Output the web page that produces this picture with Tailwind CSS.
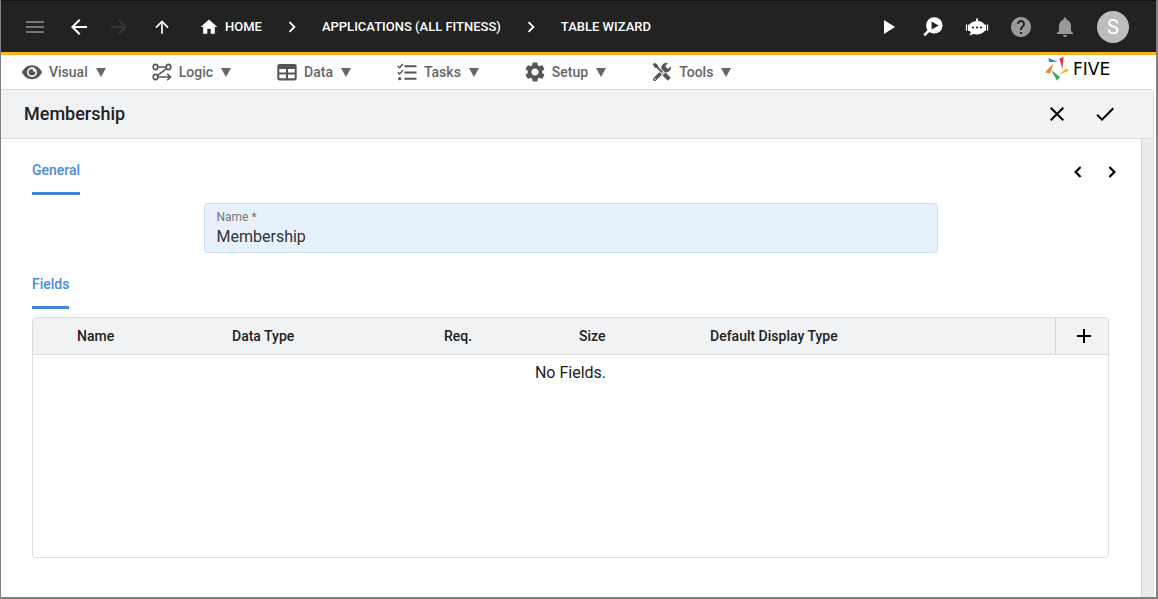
<!DOCTYPE html>
<html lang="en">
<head>
<meta charset="utf-8">
<meta name="viewport" content="width=device-width, initial-scale=1">
<title>Membership - Table Wizard</title>
<script src="https://cdn.jsdelivr.net/npm/@tailwindcss/browser@4"></script>
</head>
<body class="flex h-screen flex-col overflow-hidden border-r-2 border-b-2 border-l border-[#808080] bg-white font-['Roboto','Liberation_Sans',sans-serif] text-[#212121]">

<header class="flex h-[55px] shrink-0 items-center border-t border-b-3 border-t-[#111111] border-b-[#fbb321] bg-[#222222] text-white">
  <nav class="flex items-center pl-3" aria-label="Breadcrumb">
    <button type="button" aria-label="Menu" class="flex h-11 w-11 items-center justify-center text-[#757575]">
      <svg class="size-6" viewBox="0 0 24 24" fill="currentColor"><path d="M3 18h18v-2H3v2zm0-5h18v-2H3v2zm0-7v2h18V6H3z"/></svg>
    </button>
    <button type="button" aria-label="Back" class="flex h-11 w-11 items-center justify-center">
      <svg class="size-6" viewBox="0 0 24 24" fill="currentColor"><path d="M20 11H7.83l5.59-5.59L12 4l-8 8 8 8 1.41-1.41L7.83 13H20v-2z"/></svg>
    </button>
    <button type="button" aria-label="Forward" disabled class="flex h-11 w-9 items-center justify-center text-[#363636]">
      <svg class="size-6" viewBox="0 0 24 24" fill="currentColor"><path d="M4 11h12.17l-5.59-5.59L12 4l8 8-8 8-1.41-1.41L16.17 13H4v-2z"/></svg>
    </button>
    <button type="button" aria-label="Up" class="flex h-11 w-[50px] items-center justify-center">
      <svg class="size-5" viewBox="0 0 24 24" fill="currentColor"><path d="M4 12l1.41 1.41L11 7.83V20h2V7.83l5.58 5.59L20 12l-8-8-8 8z"/></svg>
    </button>
    <a href="#" class="ml-3 flex items-center gap-[6px] text-[13px] font-medium">
      <svg class="size-5" viewBox="0 0 24 24" fill="currentColor"><path d="M10 20v-6h4v6h5v-8h3L12 3 2 12h3v8z"/></svg>
      HOME
    </a>
    <span class="flex w-15 justify-center"><svg class="size-[22px]" viewBox="0 0 24 24" fill="currentColor"><path d="M10 6 8.59 7.41 13.17 12l-4.58 4.59L10 18l6-6z"/></svg></span>
    <a href="#" class="text-[13px] font-medium">APPLICATIONS (ALL FITNESS)</a>
    <span class="flex w-15 justify-center"><svg class="size-[22px]" viewBox="0 0 24 24" fill="currentColor"><path d="M10 6 8.59 7.41 13.17 12l-4.58 4.59L10 18l6-6z"/></svg></span>
    <a href="#" class="text-[13px] font-medium">TABLE WIZARD</a>
  </nav>
  <div class="ml-auto flex items-center pr-[17px]">
    <button type="button" aria-label="Run" class="flex size-11 items-center justify-center">
      <svg class="size-6" viewBox="0 0 24 24" fill="currentColor"><path d="M7 5v14l11-7z"/></svg>
    </button>
    <button type="button" aria-label="Inspect" class="flex size-11 items-center justify-center">
      <svg class="size-6" viewBox="0 0 24 24"><path d="M8 15.5 3.2 20.4" stroke="#fff" stroke-width="2.6"/><circle cx="13.3" cy="10.4" r="8.2" fill="#fff"/><path d="M10.6 6.4v8l7-4z" fill="#222"/></svg>
    </button>
    <button type="button" aria-label="Assistant" class="flex size-11 items-center justify-center">
      <svg class="size-6" viewBox="0 0 24 24"><path d="M11 3.500h2v2.500c3 .2 5.300 1.500 6.500 3.500h.5c.6 0 1 .4 1 1v4.500c0 .6-.4 1-1 1h-.5c-1.500 2.200-4.200 3.500-7.500 3.500-1.200 0-2.400-.2-3.400-.5L4.500 20.500l1.300-3.500c-.5-.3-.9-.7-1.300-1H4c-.6 0-1-.4-1-1v-4.500c0-.6.4-1 1-1h.5C5.700 7.700 8 6.300 11 6z" fill="#fff"/><path d="M1.500 9.500v6M22.500 9.500v6" stroke="#fff" stroke-width="1.300"/><circle cx="8" cy="12.500" r="1.100" fill="#222"/><circle cx="12" cy="12.500" r="1.100" fill="#222"/><circle cx="16" cy="12.500" r="1.100" fill="#222"/></svg>
    </button>
    <button type="button" aria-label="Help" class="flex size-11 items-center justify-center text-[#999999]">
      <svg class="size-6" viewBox="0 0 24 24" fill="currentColor"><path d="M12 2C6.480 2 2 6.480 2 12s4.480 10 10 10 10-4.480 10-10S17.520 2 12 2zm1 17h-2v-2h2v2zm2.070-7.750l-.9.920C13.450 12.900 13 13.500 13 15h-2v-.5c0-1.100.45-2.100 1.170-2.830l1.240-1.260c.37-.36.59-.86.59-1.410 0-1.100-.9-2-2-2s-2 .9-2 2H8c0-2.210 1.790-4 4-4s4 1.790 4 4c0 .88-.36 1.680-.93 2.250z"/></svg>
    </button>
    <button type="button" aria-label="Notifications" class="flex size-11 items-center justify-center text-[#999999]">
      <svg class="size-6" viewBox="0 0 24 24" fill="currentColor"><path d="M12 22c1.100 0 2-.9 2-2h-4c0 1.100.89 2 2 2zm6-6v-5c0-3.070-1.640-5.640-4.500-6.320V4c0-.83-.67-1.500-1.500-1.500s-1.500.67-1.500 1.500v.68C7.630 5.360 6 7.920 6 11v5l-2 2v1h16v-1l-2-2z"/></svg>
    </button>
    <button type="button" aria-label="Account" class="flex h-11 w-[52px] items-center justify-center">
      <span class="flex size-8 items-center justify-center rounded-full bg-[#bdbdbd] text-xl text-white">S</span>
    </button>
  </div>
</header>

<nav class="flex h-[34px] shrink-0 items-center pl-[21px] text-[14px] font-medium text-[#666666]" aria-label="Main">
  <div class="flex items-center gap-[46px]">
    <button type="button" class="flex items-center gap-[7px]">
      <svg class="size-5 text-[#555555]" viewBox="0 0 20 20" fill="currentColor"><path fill-rule="evenodd" d="M10 3.200C5.500 3.200 1.700 6 0 10.200c1.700 4.200 5.500 7 10 7s8.300-2.800 10-7c-1.700-4.200-5.500-7-10-7zm0 2.100a4.900 4.900 0 1 1 0 9.800 4.900 4.900 0 0 1 0-9.800zm0 1.700a3.300 3.300 0 1 0 3.300 3.300c0-.3 0-.6-.1-.9a1.700 1.700 0 0 1-2.300-2.300c-.3-.1-.6-.1-.9-.1z"/></svg>
      <span class="flex items-center gap-2">Visual <svg class="h-[9px] w-[10px]" viewBox="0 0 10 9" fill="currentColor"><path d="M0 0h10L5 9z"/></svg></span>
    </button>
    <button type="button" class="flex items-center gap-[7px]">
      <svg class="size-5 text-[#555555]" viewBox="0 0 20 20" fill="none" stroke="currentColor" stroke-width="1.600"><ellipse cx="3.500" cy="5" rx="2.300" ry="2.600"/><ellipse cx="16.500" cy="5" rx="2.300" ry="2.600"/><ellipse cx="3.500" cy="15" rx="2.300" ry="2.600"/><path d="M6 5h8.200M14.700 6.700 5.500 13.300M6 15h12M15.200 11.800l3.300 3.200-3.300 3.200"/></svg>
      <span class="flex items-center gap-2">Logic <svg class="h-[9px] w-[10px]" viewBox="0 0 10 9" fill="currentColor"><path d="M0 0h10L5 9z"/></svg></span>
    </button>
    <button type="button" class="flex items-center gap-[7px]">
      <svg class="size-5 text-[#555555]" viewBox="0 0 20 20" fill="currentColor"><path fill-rule="evenodd" d="M2.500 2h15A2.200 2.200 0 0 1 19.700 4.200v12a2.200 2.200 0 0 1-2.200 2.200h-15A2.200 2.200 0 0 1 .3 16.200v-12A2.200 2.200 0 0 1 2.500 2zM2.300 7v3.600h6.700V7zm8.700 0v3.600h6.700V7zM2.300 12.600v3.700h6.700v-3.700zm8.700 0v3.700h6.700v-3.700z"/></svg>
      <span class="flex items-center gap-2">Data <svg class="h-[9px] w-[10px]" viewBox="0 0 10 9" fill="currentColor"><path d="M0 0h10L5 9z"/></svg></span>
    </button>
    <button type="button" class="flex items-center gap-[7px]">
      <svg class="size-5 text-[#555555]" viewBox="0 0 20 20"><path d="M7.500 4.300h12M7.500 10.500h12M7.500 16.700h12" stroke="currentColor" stroke-width="2"/><path d="M.8 4l1.700 1.700L6 2M.8 10.200l1.700 1.700L6 8.200" fill="none" stroke="currentColor" stroke-width="1.500"/><circle cx="2.700" cy="16.700" r="1.600" fill="currentColor"/></svg>
      <span class="flex items-center gap-2">Tasks <svg class="h-[9px] w-[10px]" viewBox="0 0 10 9" fill="currentColor"><path d="M0 0h10L5 9z"/></svg></span>
    </button>
    <button type="button" class="flex items-center gap-[7px]">
      <svg class="size-5 text-[#555555]" viewBox="2 2 20 20" fill="currentColor"><path d="M19.140 12.940c.04-.3.060-.61.060-.94 0-.32-.02-.64-.07-.94l2.030-1.580c.18-.14.230-.41.120-.61l-1.920-3.320c-.12-.22-.37-.29-.59-.22l-2.390.96c-.5-.38-1.030-.7-1.620-.94l-.36-2.540c-.04-.24-.24-.41-.48-.41h-3.840c-.24 0-.43.17-.47.41l-.36 2.540c-.59.240-1.130.570-1.620.940l-2.390-.96c-.22-.08-.47 0-.59.220L2.740 8.870c-.12.210-.08.470.120.610l2.030 1.580c-.05.300-.09.630-.09.940s.02.640.070.940l-2.030 1.580c-.18.140-.23.410-.12.610l1.920 3.320c.12.220.37.290.59.220l2.390-.96c.5.380 1.030.7 1.620.940l.36 2.540c.05.240.240.410.480.410h3.840c.24 0 .44-.17.470-.41l.36-2.540c.59-.24 1.130-.56 1.620-.94l2.390.960c.22.080.470 0 .590-.22l1.920-3.320c.12-.22.070-.47-.12-.61l-2.010-1.580zM12 15.600c-1.980 0-3.600-1.620-3.600-3.600s1.620-3.600 3.600-3.600 3.600 1.620 3.600 3.600-1.620 3.600-3.600 3.600z"/></svg>
      <span class="flex items-center gap-2">Setup <svg class="h-[9px] w-[10px]" viewBox="0 0 10 9" fill="currentColor"><path d="M0 0h10L5 9z"/></svg></span>
    </button>
    <button type="button" class="flex items-center gap-[7px]">
      <svg class="size-5 text-[#555555]" viewBox="0 0 20 20"><path d="M2.800 17.200 13.200 6.800" stroke="currentColor" stroke-width="3.600" stroke-linecap="round"/><path d="M18.800 4.200a5 5 0 0 1-7.900 5.200A5 5 0 0 1 15.900 1l-2.600 2.900.6 2.300 2.300.6z" fill="currentColor"/><path d="M2.300 2.300 11 11" stroke="#fff" stroke-width="3.800"/><path d="M.8 2.600 2.600.8l3.200 2.100.4 1.900 4.900 4.900-1.400 1.400-4.900-4.900-1.900-.4z" fill="currentColor"/><path d="m12 12 5.300 5.300" stroke="currentColor" stroke-width="4.400"/><circle cx="3" cy="17" r=".8" fill="#fff"/></svg>
      <span class="flex items-center gap-2">Tools <svg class="h-[9px] w-[10px]" viewBox="0 0 10 9" fill="currentColor"><path d="M0 0h10L5 9z"/></svg></span>
    </button>
  </div>
  <a href="#" aria-label="Five home" class="mt-[2px] mr-[23px] ml-auto flex items-center gap-1 self-start text-black">
    <svg class="size-6" viewBox="0 0 24 24"><path d="M3.500 1 4 5l9-.2z" fill="#3f83d8"/><path d="M14.300 1.500 18.600 0 17.500 12z" fill="#e5353b"/><path d="M24 13.700 13.800 17.800l7.500-6.300z" fill="#fbb321"/><path d="m6 13 9 7-2.800 3.800z" fill="#3ba657"/><path d="M8.200 6.500 5 16.500 0 15.500z" fill="#f58233"/></svg>
    <span class="w-[60px] font-['DejaVu_Sans',sans-serif] text-[17px] leading-5 font-normal">FIVE</span>
  </a>
</nav>

<main class="mr-[2px] flex min-h-0 flex-1 flex-col rounded-tr border-t border-r border-[#dcdcdc]">
  <div class="flex h-[49px] shrink-0 items-center rounded-tr border-b border-[#dcdcdc] bg-[#f1f2f4] pr-6 pl-[23px]">
    <h1 class="text-lg font-medium">Membership</h1>
    <div class="ml-auto flex text-black">
      <button type="button" aria-label="Cancel" class="flex size-12 items-center justify-center">
        <svg class="size-6" viewBox="0 0 24 24" fill="currentColor"><path d="M19 6.410 17.590 5 12 10.590 6.410 5 5 6.410 10.590 12 5 17.590 6.410 19 12 13.410 17.590 19 19 17.590 13.410 12z"/></svg>
      </button>
      <button type="button" aria-label="Save" class="flex size-12 items-center justify-center">
        <svg class="size-6" viewBox="0 0 24 24" fill="currentColor"><path d="M9 16.170 4.830 12l-1.420 1.410L9 19 21 7l-1.410-1.410z"/></svg>
      </button>
    </div>
  </div>

  <div class="flex min-h-0 flex-1">
    <div class="flex min-w-0 flex-1 flex-col gap-2 pt-2 pr-8 pb-[39px] pl-[31px]">
      <div class="flex shrink-0 items-center justify-between">
        <h2 class="flex h-12 items-center rounded-t-xs border-b-3 border-[#4285d9] text-sm font-medium text-[#4a8bdb]">General</h2>
        <div class="-mr-5 flex text-black">
          <button type="button" aria-label="Previous" class="flex h-12 w-[34px] items-center justify-center pt-[2px]">
            <svg class="size-[22px]" viewBox="0 0 24 24" fill="currentColor"><path d="M15.410 7.410 14 6l-6 6 6 6 1.410-1.410L10.830 12z" stroke="currentColor" stroke-width=".5"/></svg>
          </button>
          <button type="button" aria-label="Next" class="flex h-12 w-[34px] items-center justify-center pt-[2px]">
            <svg class="size-[22px]" viewBox="0 0 24 24" fill="currentColor"><path d="M10 6 8.590 7.410 13.170 12l-4.580 4.590L10 18l6-6z" stroke="currentColor" stroke-width=".5"/></svg>
          </button>
        </div>
      </div>

      <div class="mx-auto flex h-[50px] w-full max-w-[734px] shrink-0 flex-col rounded border border-[#c8dcee] bg-[#e7f1fc] px-3 pt-[5px]">
        <label for="name" class="text-xs leading-4 text-[#757575]">Name *</label>
        <input id="name" type="text" value="Membership" class="h-6 w-full bg-transparent text-base text-[#333333] outline-none">
      </div>

      <h2 class="flex h-12 shrink-0 items-center self-start rounded-t-xs border-b-3 border-[#4285d9] text-sm font-medium text-[#4a8bdb]">Fields</h2>

      <div class="min-h-0 flex-1 overflow-hidden rounded border border-[#dcdcdc]">
        <table class="w-full table-fixed border-collapse text-left">
          <colgroup><col class="w-[183px]"><col class="w-[212px]"><col class="w-[135px]"><col class="w-[131px]"><col><col class="w-[53px]"></colgroup>
          <thead class="bg-[#f1f2f4] text-sm">
            <tr class="h-9 border-b border-[#dcdcdc]">
              <th scope="col" class="pl-11 font-medium">Name</th>
              <th scope="col" class="pl-4 font-medium">Data Type</th>
              <th scope="col" class="pl-4 font-medium">Req.</th>
              <th scope="col" class="pl-4 font-medium">Size</th>
              <th scope="col" class="pl-4 font-medium">Default Display Type</th>
              <th scope="col" class="border-l border-[#d4d4d4]">
                <button type="button" aria-label="Add field" class="flex h-8 w-full items-center justify-center pl-1 text-black">
                  <svg class="size-6" viewBox="0 0 24 24" fill="currentColor"><path d="M19 13h-6v6h-2v-6H5v-2h6V5h2v6h6v2z"/></svg>
                </button>
              </th>
            </tr>
          </thead>
          <tbody>
            <tr><td colspan="6" class="pt-[6px] text-center text-base">No Fields.</td></tr>
          </tbody>
        </table>
      </div>
    </div>
    <div class="w-3 shrink-0 border-l border-[#d4d4d4] bg-[#ebebeb]"></div>
  </div>
</main>
</body>
</html>
